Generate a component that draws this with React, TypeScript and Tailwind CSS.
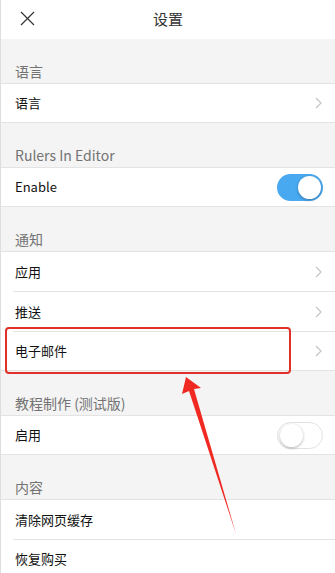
import { useState } from 'react';

function Chevron() {
  return (
    <svg width="7" height="12" viewBox="0 0 7 12" className="shrink-0 mr-[1px]">
      <path d="M1 1l5 5-5 5" fill="none" stroke="#c4c4c8" strokeWidth="1.2" />
    </svg>
  );
}

function Toggle({ on }: { on: boolean }) {
  return (
    <div
      className={`w-[46px] h-[27px] rounded-full p-[2px] flex items-center ${
        on ? 'bg-[#48a9f0] justify-end' : 'bg-white border border-[#e2e2e2] justify-start'
      }`}
    >
      <div className="w-[23px] h-[23px] rounded-full bg-white shadow-[0_1px_3px_rgba(0,0,0,0.3)]" />
    </div>
  );
}

function SectionLabel({ text }: { text: string }) {
  return (
    <div className="h-[44px] flex items-end pb-[2px] px-[14px] text-[14px] leading-[20px] text-[#737373]">
      {text}
    </div>
  );
}

function Row({ text, right, divider }: { text: string; right?: React.ReactNode; divider?: boolean }) {
  return (
    <div className={`bg-white ${divider ? 'border-b border-[#e3e3e3] ml-[12px]' : ''}`}>
      <div
        className={`flex items-center justify-between pr-[12px] ${
          divider ? 'h-[39px] pl-[2px]' : 'h-[38px] pl-[14px]'
        }`}
      >
        <span className="text-[13px] text-[#111]">{text}</span>
        {right}
      </div>
    </div>
  );
}

function Group({ children }: { children: React.ReactNode }) {
  return <div className="bg-white border-y border-[#e3e3e3]">{children}</div>;
}

export default function App() {
  const [rulers] = useState(true);

  return (
    <div
      className="relative w-[335px] h-[573px] overflow-hidden bg-[#f4f4f4] border-l border-[#dedede]"
      style={{ fontFamily: '"Noto Sans CJK SC", "Noto Sans", sans-serif' }}
    >
      {/* Header */}
      <div className="h-[39px] bg-white flex items-center relative">
        <svg width="15" height="15" viewBox="0 0 15 15" className="absolute left-[19px] top-[11px]">
          <path d="M1 1l13 13M14 1L1 14" stroke="#333" strokeWidth="1.2" />
        </svg>
        <div className="flex-1 text-center text-[15px] text-[#333]">设置</div>
      </div>

      <SectionLabel text="语言" />
      <Group>
        <Row text="语言" right={<Chevron />} />
      </Group>

      <SectionLabel text="Rulers In Editor" />
      <Group>
        <Row text="Enable" right={<Toggle on={rulers} />} />
      </Group>

      <SectionLabel text="通知" />
      <Group>
        <Row text="应用" right={<Chevron />} divider />
        <Row text="推送" right={<Chevron />} divider />
        <Row text="电子邮件" right={<Chevron />} />
      </Group>

      <SectionLabel text="教程制作 (测试版)" />
      <Group>
        <Row text="启用" right={<Toggle on={false} />} />
      </Group>

      <SectionLabel text="内容" />
      <Group>
        <Row text="清除网页缓存" divider />
        <Row text="恢复购买" />
      </Group>

      {/* Annotation */}
      <div className="absolute left-[4px] top-[327px] w-[286px] h-[47px] border-[2.5px] border-[#e1302a] rounded-[4px]" />
      <svg width="335" height="573" className="absolute left-0 top-0 pointer-events-none">
        <polygon points="185,377 181,394 188,391 235,534 193,389 200,388" fill="#f02a22" />
      </svg>
    </div>
  );
}
